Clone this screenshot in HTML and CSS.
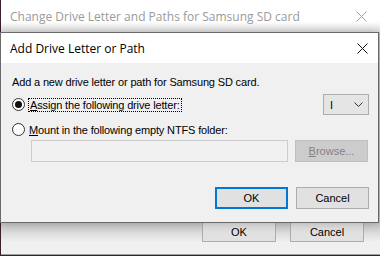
FILE: index.html
```html
<!DOCTYPE html>
<html lang="en">
<head>
    <meta charset="UTF-8">
    <title>Add Drive Letter or Path</title>
    <link rel="stylesheet" href="styles.css">
</head>
<body>
    <div class="back">
        <div class="back-title">
            <span class="back-caption">Change Drive Letter and Paths for Samsung SD card</span>
            <svg class="close" width="11" height="11" viewBox="0 0 11 11"><path d="M0.5 0.5L10.5 10.5M10.5 0.5L0.5 10.5" stroke="#a0a0a0" stroke-width="1"/></svg>
        </div>
        <div class="back-body"></div>
        <div class="back-footer">
            <button class="btn">OK</button>
            <button class="btn">Cancel</button>
        </div>
    </div>

    <div class="dialog">
        <div class="dialog-title">
            <span>Add Drive Letter or Path</span>
            <svg class="close" width="11" height="11" viewBox="0 0 11 11"><path d="M0.5 0.5L10.5 10.5M10.5 0.5L0.5 10.5" stroke="#111" stroke-width="1"/></svg>
        </div>
        <div class="dialog-body">
            <p class="intro">Add a new drive letter or path for Samsung SD card.</p>
            <div class="row">
                <label class="radio">
                    <span class="dot checked"></span>
                    <span class="focus"><u>A</u>ssign the following drive letter:</span>
                </label>
                <div class="combo">
                    <span class="letter">I</span>
                    <svg width="9" height="6" viewBox="0 0 9 6"><path d="M0.5 0.5L4.5 4.5L8.5 0.5" fill="none" stroke="#333" stroke-width="1"/></svg>
                </div>
            </div>
            <div class="row">
                <label class="radio">
                    <span class="dot"></span>
                    <span><u>M</u>ount in the following empty NTFS folder:</span>
                </label>
            </div>
            <div class="row folder-row">
                <div class="folder-input"></div>
                <button class="btn disabled"><u>B</u>rowse...</button>
            </div>
            <div class="dialog-footer">
                <button class="btn default">OK</button>
                <button class="btn">Cancel</button>
            </div>
        </div>
    </div>
</body>
</html>
```

FILE: styles.css
```css
body {
    margin: 0;
    width: 380px;
    height: 256px;
    overflow: hidden;
    position: relative;
    background: #3a1f2e;
    font-family: 'Liberation Sans', Arial, sans-serif;
    font-size: 11px;
    letter-spacing: -0.15px;
    color: #000;
}
.back {
    margin-left: 1px;
    width: 379px;
    height: 254px;
    display: flex;
    flex-direction: column;
    background: #f0f0f0;
    border-bottom: 1px solid #a0a0a0;
}
.back-title {
    height: 32px;
    display: flex;
    align-items: center;
    justify-content: space-between;
    padding: 0 13px 0 9px;
    background: linear-gradient(#fff 0, #fff 22px, #e2e2e2 32px);
    font-family: 'Open Sans', sans-serif;
    font-size: 12px;
    letter-spacing: 0;
    color: #9a9a9a;
}
.back-body {
    flex: 1;
    background: linear-gradient(#c4c4c4 190px, #f0f0f0 210px);
}
.back-footer {
    display: flex;
    justify-content: flex-end;
    gap: 14px;
    padding: 0 16px 12px 0;
    background: transparent;
}
.back-footer .btn {
    width: 74px;
    height: 21px;
    margin-top: -20px;
}
.dialog {
    position: absolute;
    top: 32px;
    left: 0;
    width: 377px;
    height: 189px;
    border: 1px solid #6a6a6a;
    background: #f0f0f0;
    box-shadow: 0 0 10px rgba(0, 0, 0, 0.25);
}
.dialog-title {
    height: 30px;
    display: flex;
    align-items: center;
    justify-content: space-between;
    padding: 0 10px 0 9px;
    background: #fff;
    font-family: 'Open Sans', sans-serif;
    font-size: 12px;
    letter-spacing: 0;
}
.dialog-body {
    padding: 13px 9px 0 11px;
}
.intro {
    margin: 0 0 5px 0;
    line-height: 13px;
}
.row {
    display: flex;
    align-items: center;
    justify-content: space-between;
}
.radio {
    display: flex;
    align-items: center;
    gap: 4px;
    height: 21px;
}
.row + .row {
    margin-top: 4px;
}
.dot {
    width: 11px;
    height: 11px;
    border: 1px solid #333;
    border-radius: 50%;
    background: #fff;
    display: flex;
    align-items: center;
    justify-content: center;
}
.dot.checked::after {
    content: '';
    width: 7px;
    height: 7px;
    border-radius: 50%;
    background: #111;
}
.focus {
    outline: 1px dotted #000;
    padding: 0 1px;
}
.combo {
    height: 19px;
    width: 33px;
    border: 1px solid #adadad;
    background: #e5e5e5;
    display: flex;
    align-items: center;
    justify-content: space-between;
    padding: 0 5px 0 6px;
}
.row.folder-row {
    margin-top: 0;
    padding-left: 19px;
}
.folder-input {
    width: 255px;
    height: 20px;
    border: 1px solid #cccccc;
    background: #f0f0f0;
}
.btn {
    font-family: 'Liberation Sans', Arial, sans-serif;
    font-size: 11px;
    letter-spacing: 0;
    width: 73px;
    height: 22px;
    margin: 0;
    padding: 0;
    border: 1px solid #adadad;
    background: #e1e1e1;
    color: #000;
}
.folder-row .btn {
    margin-right: 1px;
}
.btn.disabled {
    background: #cccccc;
    border-color: #bfbfbf;
    color: #838383;
}
.btn.default {
    border: 2px solid #0078d7;
}
.dialog-footer {
    display: flex;
    justify-content: flex-end;
    gap: 8px;
    margin-top: 25px;
}
```
